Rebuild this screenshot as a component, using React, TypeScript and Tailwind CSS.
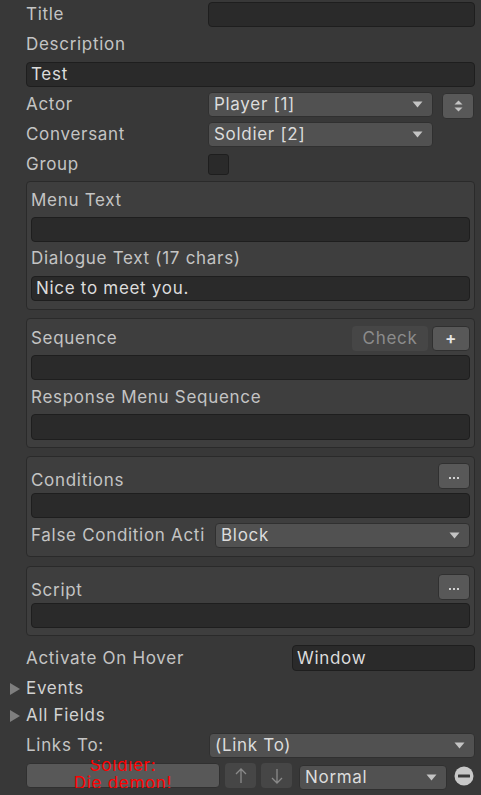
import React from 'react'

const font = { fontFamily: 'Inter, "Noto Sans", sans-serif' }

const Caret = () => (
  <svg width="11" height="7" viewBox="0 0 11 7" className="shrink-0">
    <path d="M0.5 0.5 L10.5 0.5 L5.5 6.5 Z" fill="#c4c4c4" />
  </svg>
)

const Fold = () => (
  <svg width="11" height="12" viewBox="0 0 11 12" className="shrink-0">
    <path d="M0 0 L10 6 L0 12 Z" fill="#7f7f7f" />
  </svg>
)

const Field = ({ value, className = '' }: { value?: string; className?: string }) => (
  <div
    className={`h-[25px] bg-[#2a2a2a] border border-[#1e1e1e] rounded-[4px] px-[4px] pt-[1px] flex items-center text-[17px] text-[#dcdcdc] whitespace-nowrap ${className}`}
  >
    {value}
  </div>
)

const Dropdown = ({ value, className = '' }: { value: string; className?: string }) => (
  <div
    className={`h-[25px] bg-[#515151] border border-[#303030] rounded-[4px] pl-[5px] pr-[9px] flex items-center justify-between text-[17px] text-[#dcdcdc] whitespace-nowrap ${className}`}
  >
    <span className="pt-[1px]">{value}</span>
    <Caret />
  </div>
)

const Label = ({ children, className = '' }: { children: React.ReactNode; className?: string }) => (
  <div className={`h-[25px] pt-[1px] flex items-center text-[17px] text-[#c4c4c4] whitespace-nowrap ${className}`}>
    {children}
  </div>
)

const Row = ({ label, children }: { label: string; children?: React.ReactNode }) => (
  <div className="flex items-center h-[25px]">
    <Label className="w-[182px] shrink-0">{label}</Label>
    <div className="flex-1 flex items-center gap-[9px]">{children}</div>
  </div>
)

const Box = ({ children, className = '' }: { children: React.ReactNode; className?: string }) => (
  <div className={`bg-[#3e3e3e] border border-[#2a2a2a] rounded-[4px] px-[4px] ${className}`}>{children}</div>
)

const DotsButton = () => (
  <div className="w-[32px] h-[26px] bg-[#585858] border border-[#303030] rounded-[4px] flex items-center justify-center gap-[2px] pt-[4px]">
    <span className="w-[2px] h-[2px] bg-[#d0d0d0]" />
    <span className="w-[2px] h-[2px] bg-[#d0d0d0]" />
    <span className="w-[2px] h-[2px] bg-[#d0d0d0]" />
  </div>
)

const Arrow = ({ down }: { down?: boolean }) => (
  <svg width="12" height="16" viewBox="0 0 12 16">
    {down ? (
      <path d="M6 1 V15 M1 10 L6 15 L11 10" stroke="#8a8a8a" strokeWidth="1.3" fill="none" />
    ) : (
      <path d="M6 15 V1 M1 6 L6 1 L11 6" stroke="#8a8a8a" strokeWidth="1.3" fill="none" />
    )}
  </svg>
)

export default function App() {
  return (
    <div style={font} className="w-[481px] h-[795px] bg-[#383838] overflow-hidden pl-[26px] pr-[6px] pt-[2px] tracking-[0.7px]">
      <div className="flex flex-col gap-[5px]">
        <Row label="Title">
          <Field className="flex-1" />
        </Row>
        <Label>Description</Label>
        <Field value="Test" />
        <Row label="Actor">
          <Dropdown value="Player [1]" className="w-[225px]" />
          <div className="w-[32px] h-[26px] mt-[2px] bg-[#585858] border border-[#303030] rounded-[4px] flex flex-col items-center justify-center gap-[2px]">
            <svg width="9" height="5" viewBox="0 0 9 5">
              <path d="M0.5 4.5 L4.5 0.5 L8.5 4.5 Z" fill="#c4c4c4" />
            </svg>
            <svg width="9" height="5" viewBox="0 0 9 5">
              <path d="M0.5 0.5 L8.5 0.5 L4.5 4.5 Z" fill="#c4c4c4" />
            </svg>
          </div>
        </Row>
        <Row label="Conversant">
          <Dropdown value="Soldier [2]" className="w-[225px]" />
        </Row>
        <Row label="Group">
          <div className="w-[21px] h-[21px] bg-[#2a2a2a] border border-[#1e1e1e] rounded-[3px]" />
        </Row>
      </div>

      <Box className="mt-[4px] pt-[6px] pb-[8px]">
        <Label>Menu Text</Label>
        <Field className="mt-[4px]" />
        <Label className="mt-[4px]">Dialogue Text (17 chars)</Label>
        <Field value="Nice to meet you." className="mt-[5px]" />
      </Box>

      <Box className="mt-[8px] pt-[7px] pb-[7px]">
        <div className="flex items-end h-[25px]">
          <Label className="flex-1 h-[22px]">Sequence</Label>
          <div className="w-[76px] h-[25px] bg-[#464646] rounded-[4px] flex items-center justify-center text-[17px] text-[#8c8c8c]">
            Check
          </div>
          <div className="ml-[4px] w-[38px] h-[25px] bg-[#585858] border border-[#303030] rounded-[4px] flex items-center justify-center text-[17px] font-semibold text-[#e6e6e6]">
            +
          </div>
        </div>
        <Field className="mt-[4px]" />
        <Label className="mt-[5px]">Response Menu Sequence</Label>
        <Field className="mt-[4px] h-[26px]" />
      </Box>

      <Box className="mt-[8px] pt-[6px] pb-[8px]">
        <div className="flex items-center h-[26px]">
          <Label className="flex-1 mt-[8px]">Conditions</Label>
          <DotsButton />
        </div>
        <Field className="mt-[4px]" />
        <div className="flex items-center mt-[5px]">
          <Label className="w-[184px] shrink-0 overflow-hidden">False Condition Acti</Label>
          <Dropdown value="Block" className="flex-1" />
        </div>
      </Box>

      <Box className="mt-[9px] pt-[7px] pb-[7px]">
        <div className="flex items-center h-[26px]">
          <Label className="flex-1 mt-[7px]">Script</Label>
          <DotsButton />
        </div>
        <Field className="mt-[3px]" />
      </Box>

      <div className="flex items-center h-[26px] mt-[9px]">
        <Label className="w-[266px] shrink-0">Activate On Hover</Label>
        <Field value="Window" className="flex-1 h-[26px]" />
      </div>

      <div className="flex items-center h-[25px] mt-[5px] -ml-[16px] gap-[5px]">
        <Fold />
        <span className="text-[17px] text-[#d2d2d2] pt-[1px]">Events</span>
      </div>
      <div className="flex items-center h-[25px] mt-[2px] -ml-[16px] gap-[5px]">
        <Fold />
        <span className="text-[17px] text-[#d2d2d2] pt-[1px]">All Fields</span>
      </div>

      <div className="flex items-center h-[25px] mt-[5px]">
        <Label className="w-[183px] shrink-0">Links To:</Label>
        <Dropdown value="(Link To)" className="flex-1" />
      </div>

      <div className="flex items-start mt-[5px] h-[30px]">
        <div className="relative w-[194px] h-[25px] bg-[#585858] border border-[#303030] rounded-[4px]">
          <div className="absolute left-0 right-0 top-[-4px] bottom-[-1px] overflow-hidden flex items-center justify-center">
            <div className="text-center text-[17px] leading-[18px] text-[#ff0000] whitespace-nowrap">
              Soldier:
              <br />
              Die demon!
            </div>
          </div>
        </div>
        <div className="ml-[5px] w-[31px] h-[25px] bg-[#464646] rounded-[4px] flex items-center justify-center">
          <Arrow />
        </div>
        <div className="ml-[5px] w-[31px] h-[25px] bg-[#464646] rounded-[4px] flex items-center justify-center">
          <Arrow down />
        </div>
        <Dropdown value="Normal" className="ml-[7px] w-[148px] mt-[2px]" />
        <svg width="20" height="20" viewBox="0 0 20 20" className="ml-[7px] mt-[3px]">
          <circle cx="10" cy="10" r="9.5" fill="#c8c8c8" />
          <rect x="4" y="8.5" width="12" height="3" rx="0.5" fill="#3a3a3a" />
        </svg>
      </div>
    </div>
  )
}
